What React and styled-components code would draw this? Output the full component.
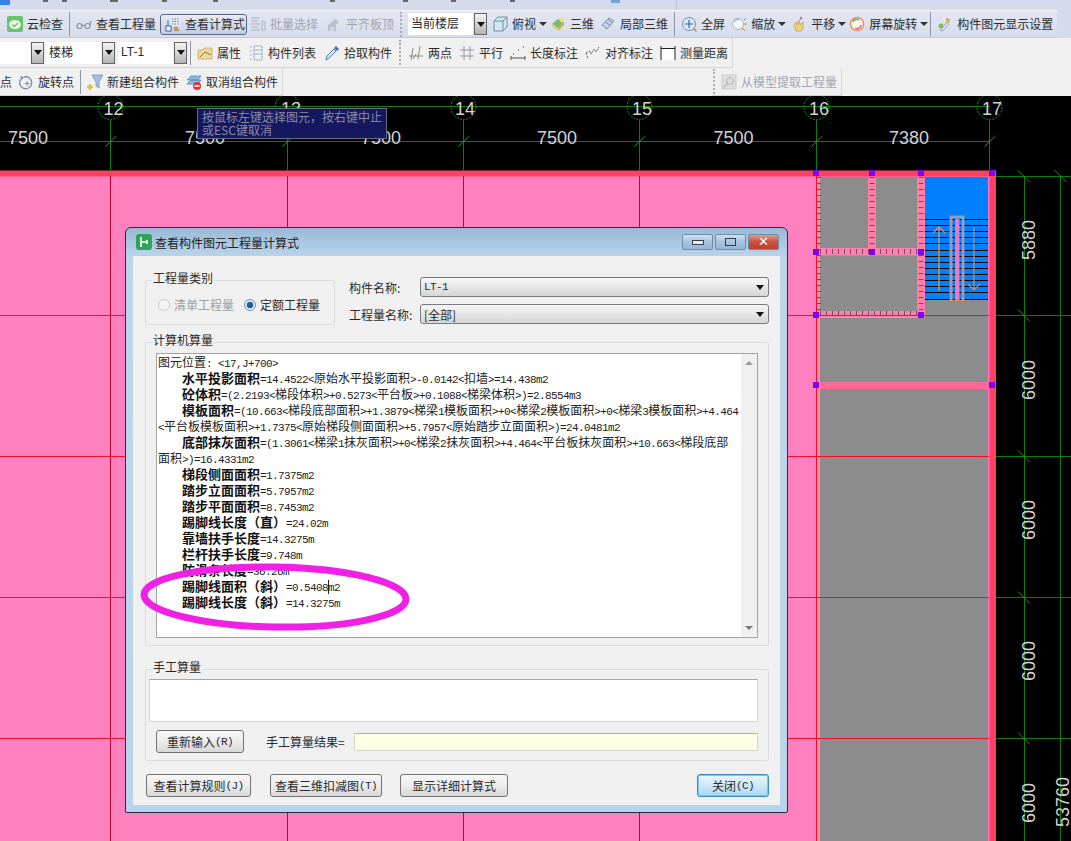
import React from 'react';
import styled, { createGlobalStyle } from 'styled-components';

const GlobalStyle = createGlobalStyle`
    html, body { margin: 0; padding: 0; background: #000; }
    body {
        font-family: "Noto Sans CJK SC", "Liberation Sans", sans-serif;
        font-size: 12px;
        color: #2a2a2a;
    }
`;

const Page = styled.div`
    width: 1071px;
    height: 841px;
    overflow: hidden;
    display: flex;
    flex-direction: column;
`;

/* ---------- toolbars ---------- */

const TopStrip = styled.div`
    height: 10px;
    flex: none;
    display: flex;
    align-items: flex-start;
    background: #d5dbed;
`;

const TopMark = styled.i`
    flex: none;
    display: block;
    width: ${p => p.$w || 5}px;
    height: ${p => p.$h || 2}px;
    margin-left: ${p => p.$ml}px;
    background: ${p => p.$c || '#666'};
`;

const BarLavender = styled.div`
    height: 28px;
    flex: none;
    background: #d5dbed;
`;

const BarGray = styled.div`
    flex: none;
    height: ${p => p.$h}px;
    display: flex;
    background: #f0f0f0;
`;

const Row = styled.div`
    width: ${p => p.$w}px;
    height: 100%;
    box-sizing: border-box;
    display: flex;
    align-items: center;
    white-space: nowrap;
`;

const MainRow = styled(Row)`
    border-top: 1px solid #f3f5fb;
    border-bottom: 1px solid #c3c9da;
    background: linear-gradient(#e3e7f2, #d6dcec);
    padding-left: 7px;
`;

const GrayRow = styled(Row)`
    border-bottom: 1px solid #d3d3d3;
    border-right: 1px solid #d8d8d8;
    background: #f0f0f0;
    margin-left: ${p => p.$ml || 0}px;
`;

const Item = styled.div`
    flex: none;
    display: flex;
    align-items: center;
    gap: 4px;
    height: 18px;
    line-height: 18px;
    margin-left: ${p => p.$ml || 0}px;
    color: ${p => (p.$off ? '#a2a6b0' : '#2c2c2c')};
`;

const ActiveItem = styled(Item)`
    height: 21px;
    padding: 0 2px 0 4px;
    border: 1px solid #5d6780;
    border-radius: 3px;
    background: linear-gradient(#e7ebf5, #c4cde0);
    box-sizing: border-box;
    width: 87px;
`;

const IconBox = styled.svg`
    flex: none;
    width: 16px;
    height: 16px;
    display: block;
`;

const Separator = styled.i`
    flex: none;
    display: block;
    width: 1px;
    height: 24px;
    background: #8f96a6;
    margin-left: ${p => p.$ml}px;
`;

const Grip = styled.i`
    flex: none;
    display: block;
    height: 25px;
    border-left: 2px dotted #a9adb8;
    margin-left: ${p => p.$ml}px;
`;

const DropCaret = styled.i`
    flex: none;
    display: block;
    width: 0;
    height: 0;
    margin-left: ${p => p.$ml}px;
    border-left: 4px solid transparent;
    border-right: 4px solid transparent;
    border-top: 4px solid #333;
`;

const ToolCombo = styled.div`
    flex: none;
    display: flex;
    align-items: center;
    height: 22px;
    margin-left: ${p => p.$ml || 0}px;
`;

const ToolComboField = styled.div`
    box-sizing: border-box;
    width: ${p => p.$w}px;
    height: 100%;
    padding-left: 3px;
    background: #fff;
    line-height: 20px;
    font-family: ${p => (p.$latin ? '"Liberation Sans", sans-serif' : 'inherit')};
`;

const ToolComboArrow = styled.div`
    box-sizing: border-box;
    width: 13px;
    height: 100%;
    margin-left: 1px;
    border: 1px solid #666;
    background: linear-gradient(#f4f4f4, #b4b4b4);
    display: flex;
    align-items: center;
    justify-content: center;
    &::after {
        content: '';
        border-left: 4px solid transparent;
        border-right: 4px solid transparent;
        border-top: 5px solid #111;
    }
`;

const Icons = {
    cloud: (<><rect x="0" y="0" width="16" height="16" rx="2" fill="#66c46a" /><ellipse cx="8" cy="8.5" rx="6" ry="4.5" fill="#e9f6e6" /><path d="M5.5 8.5l2 2 3.5-3.5" stroke="#66c46a" strokeWidth="1.4" fill="none" /></>),
    glasses: (<path d="M1 10a2.5 2.5 0 1 0 5 0 2.5 2.5 0 1 0-5 0M9 10a2.5 2.5 0 1 0 5 0 2.5 2.5 0 1 0-5 0M6 10c1-.8 2-.8 3 0M14 9l1-4" stroke="#8a8d95" strokeWidth="1.1" fill="none" />),
    calc: (<><path d="M6 1h9v9H6z" fill="#e8edf7" /><path d="M7 3h7M7 5.5h7M7 8h7" stroke="#5577aa" strokeWidth="1.2" strokeDasharray="1.5 1" /><rect x="1" y="10" width="5" height="5" fill="#fff" stroke="#2a62b0" /><path d="M3 4v6M9 11l5 4" stroke="#3a70b8" /><circle cx="11" cy="13" r="2.4" fill="#c89a4a" /></>),
    batch: (<path d="M1 2h9M1 5h7M1 8h9M1 11h7M1 14h9M12 6h3v8h-3z" stroke="#b6bbc6" strokeWidth="1.3" fill="none" />),
    level: (<><path d="M2 15V9l7-6 4 2-3 4v6z" fill="#b7bcc6" /><path d="M4 12h4M4 14h4" stroke="#e8eaf0" /></>),
    cube: (<><path d="M2 5l4-4h9v10l-4 4H2z" fill="#cfe6f2" stroke="#6d8fa8" /><path d="M2 5h9v10M11 5l4-4" stroke="#6d8fa8" fill="none" /></>),
    three: (<><path d="M2 8l6-5 6 3-6 6z" fill="#7fb56d" /><path d="M8 12l6-6v3l-6 6z" fill="#c9b04f" /><circle cx="12" cy="4" r="2.4" fill="#efe07a" /><path d="M2 8v3l6 4v-3z" fill="#d9cf8c" /></>),
    local: (<path d="M2 9l7-7 5 3-7 8zM5 6l5 3M8 3.5l4 3" fill="#c9d2e6" stroke="#7c8aa8" />),
    full: (<><circle cx="8" cy="8" r="6.5" fill="#dbe8f8" stroke="#6f8fb8" /><path d="M8 4v8M4 8h8" stroke="#3263a8" strokeWidth="1.2" /><path d="M12.5 12.5l3 3" stroke="#a79a6a" strokeWidth="1.6" /></>),
    zoom: (<><circle cx="7" cy="8" r="5.5" fill="#f4f7fb" stroke="#a9b3c4" /><path d="M3 6c1-2 3-3 5-2" stroke="#7da2c8" fill="none" /><path d="M13 4l2-2M13 8h3M11 12l3 3" stroke="#a08a4a" /></>),
    pan: (<><path d="M3 9l2-3 1 3 2-5 1 5 3-3v6l-2 3H5z" fill="#efd07c" stroke="#b8964a" strokeWidth=".7" /><path d="M10 1v3M8.8 2.2L10 1l1.2 1.2" stroke="#777" fill="none" /></>),
    rotate: (<><circle cx="8" cy="8" r="6.5" fill="#fff" stroke="#e8985a" strokeWidth="1.6" /><path d="M4 6a4 4 0 0 1 6-2" stroke="#4ab08a" strokeWidth="1.4" fill="none" /><path d="M12 9a4 4 0 0 1-6 3" stroke="#d85a78" strokeWidth="1.4" fill="none" /></>),
    display: (<><path d="M3 14l7-8 2 2-6 7z" fill="#d8dce4" stroke="#8d93a0" strokeWidth=".7" /><path d="M9 2l4 1-1 4-3-2z" fill="#d9a95a" /><circle cx="4" cy="10" r="2.5" fill="#8ab86a" /></>),
    attr: (<><path d="M1 5h5l1-2h8v11H1z" fill="#eed8a0" stroke="#c0a060" strokeWidth=".7" /><path d="M3 12l5-5 6 3" stroke="#8f7a40" fill="none" /></>),
    list: (<path d="M2 2h2M2 6h2M2 10h2M2 14h2M6 1h8v14H6zM6 5h8M6 9h8" stroke="#7d96bc" fill="none" strokeDasharray="1.4 .8" />),
    pick: (<><path d="M2 15l1-4 7-7 2 2-7 7z" fill="#dbe9f8" stroke="#4f7fc0" /><path d="M10 3l2-2 3 3-2 2z" fill="#3a6fb8" /></>),
    twoPt: (<path d="M1 11h14M5 3l-2 12M12 1l-2 13M8 9l-3 5" stroke="#8c8a80" fill="none" />),
    parallel: (<path d="M1 5h14M1 11h14M5 1v14M11 1v14" stroke="#9a92aa" fill="none" />),
    length: (<><path d="M1 11v4M15 11v4M1 13h14" stroke="#555" fill="none" /><path d="M3 9h1M8 5h1M13 2h1" stroke="#8a9a80" strokeWidth="2" /></>),
    align: (<path d="M1 8l2 6M1 8l4-2 1 3 3-5 2 3 3-5" stroke="#666" fill="none" strokeDasharray="2 1" />),
    measure: (<><rect x="2" y="3" width="13" height="12" fill="#fff" /><path d="M1 1v14M15 1v14M1 3.5h14" stroke="#222" fill="none" /></>),
    rotPt: (<><path d="M3 5a6 6 0 1 0 3-2" stroke="#7b8fae" strokeWidth="1.4" fill="none" /><path d="M2 2l4 1-2 3z" fill="#7b8fae" /><path d="M9 7v5M6.5 9.5h5" stroke="#7b8fae" /></>),
    group: (<><path d="M5 1h11l-4 7v6l-3-2V8z" fill="#a8bde0" stroke="#7088b0" strokeWidth=".7" /><path d="M3 10v6M0 13h6" stroke="#e0bc50" strokeWidth="2.4" /></>),
    ungroup: (<><path d="M1 6l4-4h10l-3 4zM1 10l4-4h10l-3 4z" fill="#8fb8e4" stroke="#4f80b8" strokeWidth=".7" /><circle cx="11" cy="12" r="4" fill="#d8383a" /><path d="M8.5 12h5" stroke="#fff" strokeWidth="1.6" /></>),
    model: (<><rect x="1" y="1" width="14" height="14" fill="#dcdcdc" stroke="#c4c4c4" /><circle cx="9" cy="7" r="3.4" fill="none" stroke="#a8a8a8" /><path d="M6.5 9.5L3 13" stroke="#a8a8a8" strokeWidth="1.4" /></>),
};

const Tool = ({ icon, label, ml, off }) => (
    <Item $ml={ml} $off={off}>
        <IconBox viewBox="0 0 16 16" style={off ? { opacity: 0.85 } : undefined}>{Icons[icon]}</IconBox>
        {label}
    </Item>
);

const Toolbars = () => (
    <>
        <TopStrip>
            <TopMark $ml={0} $w={10} $h={5} $c="#2f86e8" />
            <TopMark $ml={33} />
            <TopMark $ml={14} />
            <TopMark $ml={43} $w={8} />
            <TopMark $ml={44} />
            <TopMark $ml={46} />
            <TopMark $ml={112} />
            <TopMark $ml={68} />
            <TopMark $ml={43} />
            <TopMark $ml={54} />
            <TopMark $ml={96} $w={9} $h={3} $c="#6da6e0" />
            <TopMark $ml={56} $w={1} $h={10} $c="#bcc2d4" />
        </TopStrip>
        <BarLavender>
            <MainRow $w={1057}>
                <Tool icon="cloud" label="云检查" />
                <Separator $ml={6} />
                <Tool icon="glasses" label="查看工程量" ml={6} />
                <ActiveItem $ml={4}>
                    <IconBox viewBox="0 0 16 16">{Icons.calc}</IconBox>
                    查看计算式
                </ActiveItem>
                <Tool icon="batch" label="批量选择" ml={3} off />
                <Tool icon="level" label="平齐板顶" ml={8} off />
                <Grip $ml={6} />
                <ToolCombo $ml={6}>
                    <ToolComboField $w={65}>当前楼层</ToolComboField>
                    <ToolComboArrow />
                </ToolCombo>
                <Tool icon="cube" label="俯视" ml={5} />
                <DropCaret $ml={3} />
                <Tool icon="three" label="三维" ml={3} />
                <Tool icon="local" label="局部三维" ml={6} />
                <Separator $ml={6} />
                <Tool icon="full" label="全屏" ml={6} />
                <Tool icon="zoom" label="缩放" ml={6} />
                <DropCaret $ml={3} />
                <Tool icon="pan" label="平移" ml={5} />
                <DropCaret $ml={3} />
                <Tool icon="rotate" label="屏幕旋转" ml={3} />
                <DropCaret $ml={3} />
                <Separator $ml={2} />
                <Tool icon="display" label="构件图元显示设置" ml={6} />
            </MainRow>
        </BarLavender>
        <BarGray $h={30}>
            <GrayRow $w={733}>
                <ToolCombo>
                    <ToolComboField $w={30} />
                    <ToolComboArrow />
                </ToolCombo>
                <ToolCombo $ml={2}>
                    <ToolComboField $w={55}>楼梯</ToolComboField>
                    <ToolComboArrow />
                </ToolCombo>
                <ToolCombo $ml={3}>
                    <ToolComboField $w={55} $latin>LT-1</ToolComboField>
                    <ToolComboArrow />
                </ToolCombo>
                <Separator $ml={3} />
                <Tool icon="attr" label="属性" ml={6} />
                <Tool icon="list" label="构件列表" ml={7} />
                <Tool icon="pick" label="拾取构件" ml={8} />
                <Grip $ml={7} />
                <Tool icon="twoPt" label="两点" ml={7} />
                <Tool icon="parallel" label="平行" ml={7} />
                <Tool icon="length" label="长度标注" ml={7} />
                <Tool icon="align" label="对齐标注" ml={7} />
                <Tool icon="measure" label="测量距离" ml={7} />
            </GrayRow>
        </BarGray>
        <BarGray $h={28}>
            <GrayRow $w={283}>
                <Item>点</Item>
                <Tool icon="rotPt" label="旋转点" ml={6} />
                <Separator $ml={6} />
                <Tool icon="group" label="新建组合构件" ml={6} />
                <Tool icon="ungroup" label="取消组合构件" ml={7} />
            </GrayRow>
            <GrayRow $w={130} $ml={429}>
                <Grip $ml={1} />
                <Tool icon="model" label="从模型提取工程量" ml={6} off />
            </GrayRow>
        </BarGray>
    </>
);

/* ---------- drawing ---------- */

const CanvasArea = styled.div`
    position: relative;
    flex: 1;
    background: #000;
    overflow: hidden;
`;

const Drawing = styled.svg`
    display: block;
    width: 1071px;
    height: 745px;
    text {
        font-family: "Liberation Sans", sans-serif;
        font-size: 18px;
        fill: #d2d2d2;
    }
`;

const GREEN = '#0b7d0b';
const RED = '#f0102c';
const AXES = [
    { x: 110.5, label: '12', tx: 113.5 },
    { x: 287.5, label: '13', tx: 291 },
    { x: 463.5, label: '14', tx: 465 },
    { x: 639.5, label: '15', tx: 642 },
    { x: 816.5, label: '16', tx: 819 },
    { x: 989.5, label: '17', tx: 992 },
];
const SPANS = [
    { x: 28, t: '7500' }, { x: 205, t: '7500' }, { x: 381, t: '7500' },
    { x: 557, t: '7500' }, { x: 733.5, t: '7500' }, { x: 909, t: '7380' },
];
const ROWS = [315.5, 456.5, 597.5, 738.5];
const SIDE = [
    { y: 240, t: '5880' }, { y: 380, t: '6000' }, { y: 520, t: '6000' },
    { y: 661, t: '6000' }, { y: 803, t: '6000' },
];
const GRIPS = [
    [816, 173], [872, 173], [921, 173], [992, 173], [816, 252], [872, 252],
    [921, 252], [816, 315], [921, 315], [816, 385], [992, 385],
];
const TREADS = Array.from({ length: 14 }, (_, i) => Math.round(219 + i * 6.12) + 0.5);

const CadDrawing = () => (
    <Drawing viewBox="0 96 1071 745">
        {/* slab and walls */}
        <rect x="0" y="176" width="990" height="665" fill="#ff80bf" />
        <rect x="817" y="177" width="3" height="664" fill="#ff8aa8" />
        <rect x="820" y="177" width="169" height="664" fill="#8c8c8c" />
        <rect x="925" y="177" width="63" height="123" fill="#0080ff" />
        <rect x="0" y="170.5" width="996" height="6" fill="#ff4060" />
        <rect x="989" y="170.5" width="7" height="671" fill="#ff4060" />
        <rect x="988" y="177" width="1.5" height="664" fill="#ff70c8" />

        {/* pink beams */}
        <rect x="868" y="177" width="8" height="72" fill="#ff7fa8" />
        <rect x="917" y="177" width="8" height="141" fill="#ff7fa8" />
        <rect x="820" y="248" width="105" height="7.5" fill="#ff7fb0" />
        <rect x="820" y="311" width="105" height="7" fill="#ff7fb0" />
        <rect x="820" y="382" width="169" height="7" fill="#ff6a98" />
        <path d="M872 177V248M921 177V311M818.5 177V315" stroke="#705050" strokeWidth="5" strokeDasharray="1 5" fill="none" />
        <path d="M820 251.5H917M820 313.5H917" stroke="#705050" strokeWidth="5" strokeDasharray="1 5" fill="none" />

        {/* stairs */}
        {TREADS.map(y => <path key={y} d={`M925 ${y}H988`} stroke="#000" />)}
        <path d="M951 300V217H963V300" stroke="#9a9ab8" strokeWidth="3" fill="none" />
        <rect x="955" y="219" width="4.5" height="81" fill="#e878c0" />
        <path d="M949 300.5H965" stroke="#d89050" />
        <path d="M939 291V227M933 233L939 227L945 233" stroke="#e09040" strokeWidth="1.4" fill="none" />
        <path d="M974 227V290M968 284L974 290L980 284" stroke="#a09088" strokeWidth="1.4" fill="none" />

        {/* red grid over the slab */}
        {AXES.map(a => <path key={a.x} d={`M${a.x} 176V841`} stroke={a.x === 816.5 ? RED : '#c8002c'} strokeWidth={a.x === 989.5 ? 0 : 1} />)}
        {ROWS.map(y => <path key={y} d={`M0 ${y}H989`} stroke={RED} />)}

        {/* top axes */}
        <path d="M0 106.5H990M0 141.5H990" stroke={GREEN} />
        {AXES.map(a => (
            <g key={a.label}>
                <circle cx={a.x} cy="107" r="12.5" fill="none" stroke="#0f8f0f" strokeDasharray="2 1" />
                <path d={`M${a.x} 119.5V171`} stroke={GREEN} />
                <path d={`M${a.x - 5} 146.5L${a.x + 6} 136`} stroke="#3c8a3c" />
                <text x={a.tx} y="114.5" textAnchor="middle">{a.label}</text>
            </g>
        ))}
        {SPANS.map(s => <text key={s.x} x={s.x} y="143.5" textAnchor="middle">{s.t}</text>)}

        {/* right axes */}
        <path d="M1024.5 176V841M1060.5 176V841" stroke={GREEN} />
        {[176.5, ...ROWS].map(y => (
            <g key={y}>
                <path d={`M996 ${y}H1071`} stroke={GREEN} />
                <path d={`M${1018} ${y - 6}L${1030} ${y + 6}`} stroke="#3c8a3c" />
            </g>
        ))}
        <path d="M1054.5 170L1066.5 182" stroke="#3c8a3c" />
        {SIDE.map(s => (
            <text key={s.y} x="0" y="0" textAnchor="middle" transform={`translate(1035 ${s.y}) rotate(-90)`}>{s.t}</text>
        ))}
        <text x="0" y="0" textAnchor="middle" transform="translate(1069 802) rotate(-90)">53760</text>

        {GRIPS.map(([x, y]) => <rect key={`${x}-${y}`} x={x - 3} y={y - 3} width="6" height="6" fill="#8000f0" />)}
    </Drawing>
);

const HintTip = styled.div`
    position: absolute;
    left: 197px;
    top: 12px;
    width: 190px;
    height: 31px;
    box-sizing: border-box;
    padding: 1px 4px;
    border: 1px solid #6a6a80;
    background: #16185f;
    color: #8b8ba6;
    line-height: 13px;
    white-space: nowrap;
`;

/* ---------- dialog ---------- */

const DialogFrame = styled.div`
    position: absolute;
    left: 125px;
    top: 131px;
    width: 663px;
    height: 586px;
    box-sizing: border-box;
    display: flex;
    flex-direction: column;
    padding: 0 7px 7px;
    border: 1px solid #20303f;
    border-radius: 6px 6px 2px 2px;
    background: linear-gradient(#9ab9d6 0, #bcd5ec 30px, #b8d4ec 100%);
    white-space: nowrap;
`;

const TitleBar = styled.div`
    height: 28px;
    flex: none;
    display: flex;
    align-items: center;
    padding-left: 3px;
    gap: 3px;
`;

const TitleIcon = styled.svg`
    width: 16px;
    height: 16px;
    flex: none;
`;

const TitleText = styled.div`
    flex: 1;
    color: #222;
`;

const WinControls = styled.div`
    display: flex;
    gap: 2px;
    margin-right: 1px;
`;

const WinButton = styled.div`
    box-sizing: border-box;
    width: 31px;
    height: 16px;
    display: flex;
    align-items: center;
    justify-content: center;
    border: 1px solid #6f8ba8;
    border-radius: 2px;
    background: ${p => (p.$close
        ? 'linear-gradient(#e09a8c, #c8503e 50%, #c0402f)'
        : 'linear-gradient(#cfe0f0, #a6c2de 50%, #98b6d4)')};
`;

const MinGlyph = styled.i`
    display: block;
    width: 10px;
    height: 3px;
    border: 1px solid #333e4a;
    background: #e8eef4;
`;

const MaxGlyph = styled(MinGlyph)`
    height: 6px;
    width: 9px;
    background: transparent;
`;

const CloseGlyph = styled.span`
    color: #fff;
    font-family: "DejaVu Sans", sans-serif;
    font-weight: 700;
    font-size: 13px;
    line-height: 14px;
`;

const Client = styled.div`
    flex: 1;
    background: #f0f0f0;
    display: flex;
    flex-direction: column;
    padding: 21px 11px 0 12px;
    min-height: 0;
`;

const TopRow = styled.div`
    display: flex;
    height: 47px;
`;

const Group = styled.div`
    position: relative;
    box-sizing: border-box;
    border: 1px solid #dcdcdc;
    border-radius: 2px;
`;

const GroupTitle = styled.span`
    position: absolute;
    left: 6px;
    top: -11px;
    padding: 0 1px;
    background: #f0f0f0;
    line-height: 16px;
`;

const TypeGroup = styled(Group)`
    width: 190px;
    height: 45px;
    margin-top: 3px;
    display: flex;
    align-items: center;
    padding: 4px 0 0 12px;
`;

const RadioLabel = styled.label`
    display: flex;
    align-items: center;
    gap: 4px;
    margin-right: 10px;
    color: ${p => (p.$off ? '#a0a0a0' : '#2a2a2a')};
`;

const RadioDot = styled.i`
    display: block;
    box-sizing: border-box;
    width: 12px;
    height: 12px;
    border-radius: 50%;
    border: 1px solid ${p => (p.$off ? '#cdcdcd' : '#7f93aa')};
    background: ${p => (p.$on
        ? 'radial-gradient(circle, #1f5f9a 0 3px, #dfe9f2 3.6px)'
        : '#f4f4f4')};
`;

const Pickers = styled.div`
    margin-left: 14px;
    flex: 1;
    display: flex;
    flex-direction: column;
    gap: 7px;
`;

const PickerRow = styled.div`
    display: flex;
    align-items: center;
    height: ${p => p.$h}px;
`;

const PickerLabel = styled.span`
    width: 71px;
    flex: none;
`;

const Combo = styled.div`
    flex: 1;
    height: 100%;
    box-sizing: border-box;
    display: flex;
    align-items: center;
    justify-content: space-between;
    padding: 0 4px 0 3px;
    border: 1px solid #7a7a7a;
    border-radius: 3px;
    background: linear-gradient(#f6f6f6, #e6e6e6 50%, #d6d6d6);
    &::after {
        content: '';
        border-left: 4px solid transparent;
        border-right: 4px solid transparent;
        border-top: 5px solid #111;
    }
`;

const ResultGroup = styled(Group)`
    height: 304px;
    margin-top: 18px;
    padding: 10px 10px 7px 10px;
`;

const ResultBox = styled.div`
    height: 100%;
    box-sizing: border-box;
    display: flex;
    border: 1px solid #a2a2a2;
    background: #fff;
`;

const ResultText = styled.div`
    flex: 1;
    min-width: 0;
    padding: 0 0 0 1px;
    overflow: hidden;
`;

const Line = styled.div`
    height: 16px;
    line-height: 16px;
    padding-left: ${p => (p.$indent ? 24 : 0)}px;
    color: #222;
`;

const Label = styled.b`
    font-size: 13px;
    font-weight: 700;
    color: #111;
`;

const Latin = styled.span`
    font-family: "Liberation Mono", monospace;
    font-size: 11px;
    letter-spacing: -0.6px;
`;

const TextCaret = styled.i`
    display: inline-block;
    width: 1px;
    height: 14px;
    margin-right: -1px;
    vertical-align: -3px;
    background: #222;
`;

const ScrollBar = styled.div`
    flex: none;
    width: 16px;
    display: flex;
    flex-direction: column;
    justify-content: space-between;
    align-items: center;
    padding: 7px 0;
    background: #f0f0f0;
    box-sizing: border-box;
`;

const ScrollArrow = styled.i`
    display: block;
    width: 0;
    height: 0;
    border-left: 4px solid transparent;
    border-right: 4px solid transparent;
    ${p => (p.$up ? 'border-bottom: 4px solid #9a9a9a;' : 'border-top: 4px solid #7a7a7a;')}
`;

const ManualGroup = styled(Group)`
    height: 92px;
    margin-top: 23px;
    padding: 9px 10px 0 3px;
`;

const ManualInput = styled.div`
    height: 43px;
    box-sizing: border-box;
    border: 1px solid #d4d4d4;
    border-top-color: #a8a8a8;
    background: #fff;
`;

const ManualRow = styled.div`
    display: flex;
    align-items: center;
    margin-top: 8px;
    padding-left: 7px;
`;

const PushButton = styled.div`
    flex: none;
    box-sizing: border-box;
    width: ${p => p.$w}px;
    height: 23px;
    display: flex;
    align-items: center;
    justify-content: center;
    border: 1px solid ${p => (p.$focus ? '#3a8cc4' : '#727272')};
    border-radius: 3px;
    background: ${p => (p.$focus
        ? 'linear-gradient(#eaf6fd, #cfe8f8 50%, #a9d6f2)'
        : 'linear-gradient(#f7f7f7, #ececec 50%, #d8d8d8)')};
    box-shadow: ${p => (p.$focus ? 'inset 0 0 0 1px #7fc4ee' : 'none')};
    margin-left: ${p => p.$ml || 0}px;
`;

const ManualLabel = styled.span`
    margin-left: 22px;
    width: 88px;
    flex: none;
`;

const ResultField = styled.div`
    flex: 1;
    height: 18px;
    box-sizing: border-box;
    border: 1px solid #d8d8c8;
    border-top-color: #b0b0a4;
    background: #ffffe6;
`;

const FooterRow = styled.div`
    display: flex;
    margin-top: 13px;
    padding-left: 1px;
`;

const FooterClose = styled(PushButton)`
    margin-left: auto;
`;

const Mark = styled.svg`
    position: absolute;
    left: 135px;
    top: 464px;
    width: 280px;
    height: 76px;
    pointer-events: none;
`;

// latin runs get their own face so the half-width columns line up with the cjk ones
const runs = text => text.split(/([\x20-\x7e]+)/).map((part, i) => (
    /^[\x20-\x7e]+$/.test(part) ? <Latin key={i}>{part}</Latin> : part
));

const LINES = [
    { text: '图元位置: <17,J+700>' },
    { label: '水平投影面积', text: '=14.4522<原始水平投影面积>-0.0142<扣墙>=14.438m2', indent: true },
    { label: '砼体积', text: '=(2.2193<梯段体积>+0.5273<平台板>+0.1088<梯梁体积>)=2.8554m3', indent: true },
    { label: '模板面积', text: '=(10.663<梯段底部面积>+1.3879<梯梁1模板面积>+0<梯梁2模板面积>+0<梯梁3模板面积>+4.464', indent: true },
    { text: '<平台板模板面积>+1.7375<原始梯段侧面面积>+5.7957<原始踏步立面面积>)=24.0481m2' },
    { label: '底部抹灰面积', text: '=(1.3061<梯梁1抹灰面积>+0<梯梁2抹灰面积>+4.464<平台板抹灰面积>+10.663<梯段底部', indent: true },
    { text: '面积>)=16.4331m2' },
    { label: '梯段侧面面积', text: '=1.7375m2', indent: true },
    { label: '踏步立面面积', text: '=5.7957m2', indent: true },
    { label: '踏步平面面积', text: '=8.7453m2', indent: true },
    { label: '踢脚线长度（直）', text: '=24.02m', indent: true },
    { label: '靠墙扶手长度', text: '=14.3275m', indent: true },
    { label: '栏杆扶手长度', text: '=9.748m', indent: true },
    { label: '防滑条长度', text: '=36.26m', indent: true },
];

const QuantityDialog = () => (
    <DialogFrame>
        <TitleBar>
            <TitleIcon viewBox="0 0 16 16">
                <rect width="16" height="16" rx="3" fill="#2fa35a" />
                <path d="M5 3v10M5 8h6M11 6v4" stroke="#fff" strokeWidth="1.6" fill="none" />
            </TitleIcon>
            <TitleText>查看构件图元工程量计算式</TitleText>
            <WinControls>
                <WinButton><MinGlyph /></WinButton>
                <WinButton><MaxGlyph /></WinButton>
                <WinButton $close><CloseGlyph>✕</CloseGlyph></WinButton>
            </WinControls>
        </TitleBar>
        <Client>
            <TopRow>
                <TypeGroup>
                    <GroupTitle>工程量类别</GroupTitle>
                    <RadioLabel $off><RadioDot $off />清单工程量</RadioLabel>
                    <RadioLabel><RadioDot $on />定额工程量</RadioLabel>
                </TypeGroup>
                <Pickers>
                    <PickerRow $h={20}>
                        <PickerLabel>构件名称:</PickerLabel>
                        <Combo>{runs('LT-1')}</Combo>
                    </PickerRow>
                    <PickerRow $h={20}>
                        <PickerLabel>工程量名称:</PickerLabel>
                        <Combo>[全部]</Combo>
                    </PickerRow>
                </Pickers>
            </TopRow>
            <ResultGroup>
                <GroupTitle>计算机算量</GroupTitle>
                <ResultBox>
                    <ResultText>
                        {LINES.map(l => (
                            <Line key={l.text} $indent={l.indent}>
                                {l.label && <Label>{l.label}</Label>}
                                {runs(l.text)}
                            </Line>
                        ))}
                        <Line $indent>
                            <Label>踢脚线面积（斜）</Label>
                            {runs('=0.5408')}
                            <TextCaret />
                            {runs('m2')}
                        </Line>
                        <Line $indent>
                            <Label>踢脚线长度（斜）</Label>
                            {runs('=14.3275m')}
                        </Line>
                    </ResultText>
                    <ScrollBar>
                        <ScrollArrow $up />
                        <ScrollArrow />
                    </ScrollBar>
                </ResultBox>
            </ResultGroup>
            <ManualGroup>
                <GroupTitle>手工算量</GroupTitle>
                <ManualInput />
                <ManualRow>
                    <PushButton $w={88}>重新输入{runs('(R)')}</PushButton>
                    <ManualLabel>手工算量结果=</ManualLabel>
                    <ResultField />
                </ManualRow>
            </ManualGroup>
            <FooterRow>
                <PushButton $w={105}>查看计算规则{runs('(J)')}</PushButton>
                <PushButton $w={112} $ml={19}>查看三维扣减图{runs('(T)')}</PushButton>
                <PushButton $w={108} $ml={18}>显示详细计算式</PushButton>
                <FooterClose $w={72} $focus>关闭{runs('(C)')}</FooterClose>
            </FooterRow>
        </Client>
    </DialogFrame>
);

const App = () => (
    <Page>
        <GlobalStyle />
        <Toolbars />
        <CanvasArea>
            <CadDrawing />
            <HintTip>
                按鼠标左键选择图元，按右键中止
                <br />
                或ESC键取消
            </HintTip>
            <QuantityDialog />
            <Mark viewBox="0 0 280 76">
                <ellipse cx="140" cy="37" rx="131" ry="30" fill="none" stroke="#f020e4" strokeWidth="7" transform="rotate(1 140 37)" />
            </Mark>
        </CanvasArea>
    </Page>
);

export default App;
